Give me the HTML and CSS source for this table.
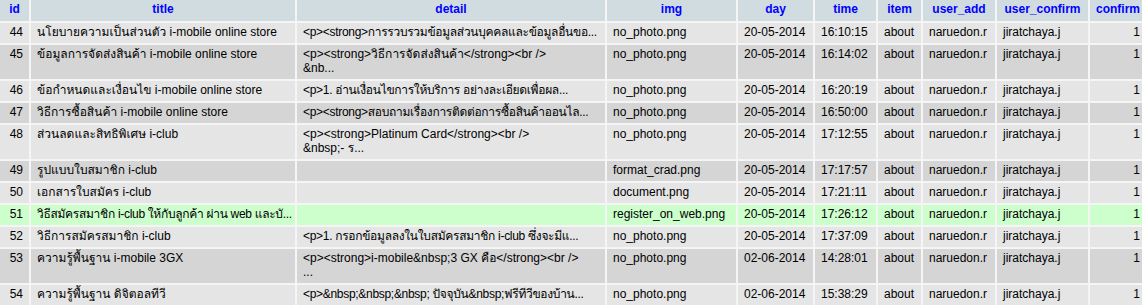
FILE: index.html
```html
<!DOCTYPE html>
<html lang="th">
<head>
<meta charset="utf-8">
<title>table</title>
<link rel="stylesheet" href="styles.css">
</head>
<body>
<table class="data">
<colgroup>
<col class="c-id"><col class="c-title"><col class="c-detail"><col class="c-img"><col class="c-day"><col class="c-time"><col class="c-item"><col class="c-uadd"><col class="c-uconf"><col class="c-conf">
</colgroup>
<thead>
<tr><th>id</th><th>title</th><th>detail</th><th>img</th><th>day</th><th>time</th><th>item</th><th>user_add</th><th>user_confirm</th><th>confirm</th></tr>
</thead>
<tbody>
<tr class="odd"><td class="num">44</td><td>นโยบายความเป็นส่วนตัว i-mobile online store</td><td class="tight">&lt;p&gt;&lt;strong&gt;การรวบรวมข้อมูลส่วนบุคคลและข้อมูลอื่นขอ...</td><td>no_photo.png</td><td>20-05-2014</td><td>16:10:15</td><td>about</td><td>naruedon.r</td><td>jiratchaya.j</td><td class="num">1</td></tr>
<tr class="even"><td class="num">45</td><td>ข้อมูลการจัดส่งสินค้า i-mobile online store</td><td>&lt;p&gt;&lt;strong&gt;วิธีการจัดส่งสินค้า&lt;/strong&gt;&lt;br /&gt;<br>&amp;nb...</td><td>no_photo.png</td><td>20-05-2014</td><td>16:14:02</td><td>about</td><td>naruedon.r</td><td>jiratchaya.j</td><td class="num">1</td></tr>
<tr class="odd"><td class="num">46</td><td>ข้อกำหนดและเงื่อนไข i-mobile online store</td><td class="tight">&lt;p&gt;1. อ่านเงื่อนไขการให้บริการ อย่างละเอียดเพื่อผล...</td><td>no_photo.png</td><td>20-05-2014</td><td>16:20:19</td><td>about</td><td>naruedon.r</td><td>jiratchaya.j</td><td class="num">1</td></tr>
<tr class="even"><td class="num">47</td><td>วิธีการซื้อสินค้า i-mobile online store</td><td class="tight">&lt;p&gt;&lt;strong&gt;สอบถามเรื่องการติดต่อการซื้อสินค้าออนไล...</td><td>no_photo.png</td><td>20-05-2014</td><td>16:50:00</td><td>about</td><td>naruedon.r</td><td>jiratchaya.j</td><td class="num">1</td></tr>
<tr class="odd"><td class="num">48</td><td>ส่วนลดและสิทธิพิเศษ i-club</td><td>&lt;p&gt;&lt;strong&gt;Platinum Card&lt;/strong&gt;&lt;br /&gt;<br>&amp;nbsp;- ร...</td><td>no_photo.png</td><td>20-05-2014</td><td>17:12:55</td><td>about</td><td>naruedon.r</td><td>jiratchaya.j</td><td class="num">1</td></tr>
<tr class="even"><td class="num">49</td><td>รูปแบบใบสมาชิก i-club</td><td></td><td>format_crad.png</td><td>20-05-2014</td><td>17:17:57</td><td>about</td><td>naruedon.r</td><td>jiratchaya.j</td><td class="num">1</td></tr>
<tr class="odd"><td class="num">50</td><td>เอกสารใบสมัคร i-club</td><td></td><td>document.png</td><td>20-05-2014</td><td>17:21:11</td><td>about</td><td>naruedon.r</td><td>jiratchaya.j</td><td class="num">1</td></tr>
<tr class="marked"><td class="num">51</td><td class="tight">วิธีสมัครสมาชิก i-club ให้กับลูกค้า ผ่าน web และบั...</td><td></td><td>register_on_web.png</td><td>20-05-2014</td><td>17:26:12</td><td>about</td><td>naruedon.r</td><td>jiratchaya.j</td><td class="num">1</td></tr>
<tr class="odd"><td class="num">52</td><td>วิธีการสมัครสมาชิก i-club</td><td class="tight">&lt;p&gt;1. กรอกข้อมูลลงในใบสมัครสมาชิก i-club ซึ่งจะมีแ...</td><td>no_photo.png</td><td>20-05-2014</td><td>17:37:09</td><td>about</td><td>naruedon.r</td><td>jiratchaya.j</td><td class="num">1</td></tr>
<tr class="even"><td class="num">53</td><td>ความรู้พื้นฐาน i-mobile 3GX</td><td>&lt;p&gt;&lt;strong&gt;i-mobile&amp;nbsp;3 GX คือ&lt;/strong&gt;&lt;br /&gt;<br>...</td><td>no_photo.png</td><td>02-06-2014</td><td>14:28:01</td><td>about</td><td>naruedon.r</td><td>jiratchaya.j</td><td class="num">1</td></tr>
<tr class="odd"><td class="num">54</td><td>ความรู้พื้นฐาน ดิจิตอลทีวี</td><td class="tight">&lt;p&gt;&amp;nbsp;&amp;nbsp;&amp;nbsp; ปัจจุบัน&amp;nbsp;ฟรีทีวีของบ้าน...</td><td>no_photo.png</td><td>02-06-2014</td><td>15:38:29</td><td>about</td><td>naruedon.r</td><td>jiratchaya.j</td><td class="num">1</td></tr>
</tbody>
</table>
</body>
</html>
```
FILE: styles.css
```css
html, body {
  margin: 0;
  padding: 0;
  background: #f5f5f5;
}
body {
  font-family: "Liberation Sans", Arial, Tahoma, "Waree", "Loma", sans-serif;
  font-size: 12px;
  color: #000;
}
.data {
  border-collapse: separate;
  border-spacing: 2px;
  margin: -2px 0 0 -2px;
  table-layout: fixed;
  width: 1148px;
}
.c-id { width: 29px; }
.c-title { width: 264px; }
.c-detail { width: 308px; }
.c-img { width: 129px; }
.c-day { width: 75px; }
.c-time { width: 61px; }
.c-item { width: 43px; }
.c-uadd { width: 72px; }
.c-uconf { width: 91px; }
.c-conf { width: 56px; }
.data th {
  background: #d0dce0;
  color: #0000ff;
  font-weight: bold;
  text-align: center;
  padding: 2px 4px 4px;
  height: 15px;
  line-height: 15px;
  white-space: nowrap;
  overflow: hidden;
}
.data td {
  padding: 2px 6px 4px;
  line-height: 14px;
  vertical-align: top;
  white-space: nowrap;
  overflow: hidden;
}
.data td.tight { letter-spacing: -0.3px; }
.data td.num { text-align: right; }
.odd td { background: #e5e5e5; }
.even td { background: #d5d5d5; }
.marked td { background: #ccffcc; }
```
